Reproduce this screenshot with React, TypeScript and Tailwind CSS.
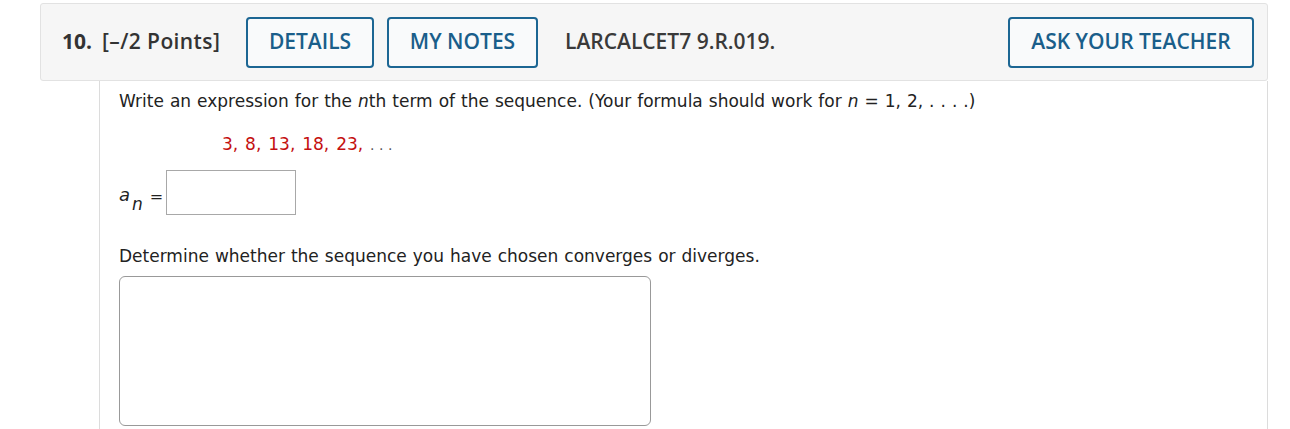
export default function App() {
    return (
        <div className="w-[1290px] h-[429px] bg-white overflow-hidden pl-[40px] pr-[22px] pt-[3px]">
            <div
                className="flex items-center h-[78px] bg-[#f6f6f6] border border-[#e2e2e2] rounded-[3px] pl-[21px] pr-[13px]"
                style={{ fontFamily: '"Open Sans", sans-serif' }}
            >
                <span className="text-[21px] font-bold text-[#333]">10.</span>
                <span className="ml-[10px] text-[21px] font-semibold text-[#333] tracking-[0.4px]">[–/2 Points]</span>
                <button className="ml-auto h-[51px] w-[128px] border-2 border-[#1c6693] rounded-[4px] text-[21px] font-semibold text-[#1a5e8a] bg-[#f9fafb]">
                    DETAILS
                </button>
                <button className="ml-[13px] h-[51px] w-[151px] border-2 border-[#1c6693] rounded-[4px] text-[21px] font-semibold text-[#1a5e8a] bg-[#f9fafb]">
                    MY NOTES
                </button>
                <span className="ml-[27px] w-[443px] text-[21px] font-semibold text-[#3a3a3a]">LARCALCET7 9.R.019.</span>
                <button className="h-[51px] w-[246px] border-2 border-[#1c6693] rounded-[4px] text-[21px] font-semibold text-[#1a5e8a] bg-[#f9fafb]">
                    ASK YOUR TEACHER
                </button>
            </div>
            <div
                className="ml-[59px] border-l border-r border-[#dcdcdc] h-[360px] pl-[19px] pt-[9px] text-[17px] text-[#222] [word-spacing:0.6px]"
                style={{ fontFamily: '"DejaVu Sans", Verdana, sans-serif' }}
            >
                <p className="leading-[22px]">
                    Write an expression for the <i>n</i>th term of the sequence. (Your formula should work for <i>n</i> = 1, 2, . . . .)
                </p>
                <p className="mt-[21px] ml-[103px] leading-[22px] text-[#c41010] [word-spacing:1.5px]">
                    3, 8, 13, 18, 23, <span className="text-[#555] text-[14px] [word-spacing:0px]">. . .</span>
                </p>
                <div className="mt-[14px] flex items-center">
                    <span className="italic text-[18px] relative top-[2px]">a</span>
                    <span className="italic text-[17px] relative top-[12px] ml-[2px]">n</span>
                    <span className="ml-[7px] text-[16px] relative top-[4px]">=</span>
                    <div className="ml-[3px] w-[130px] h-[45px] border border-[#a8a8a8] bg-white" />
                </div>
                <p className="mt-[30px] leading-[22px]">
                    Determine whether the sequence you have chosen converges or diverges.
                </p>
                <div className="mt-[9px] w-[532px] h-[150px] border border-[#999] rounded-[6px] bg-white" />
            </div>
        </div>
    )
}
